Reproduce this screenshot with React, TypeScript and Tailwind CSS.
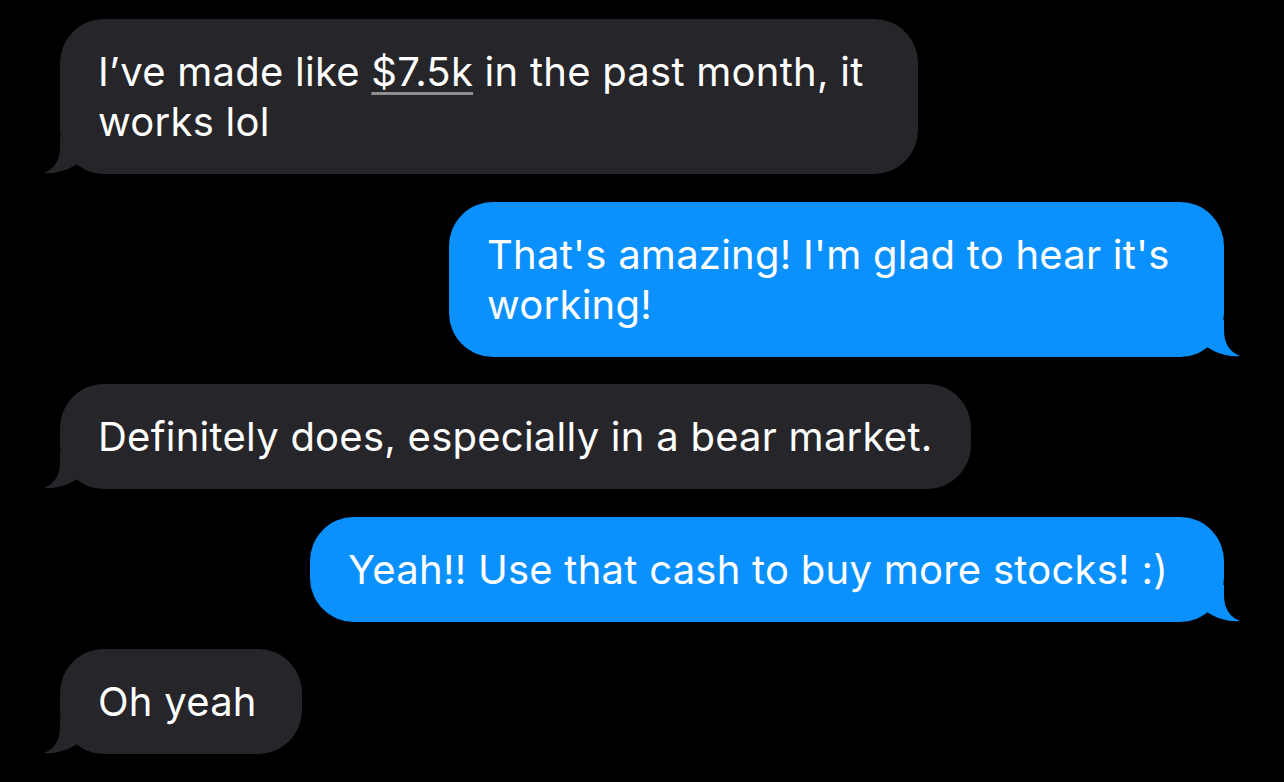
const Tail = ({ side, color }: { side: 'left' | 'right'; color: string }) => (
  <svg
    width="40"
    height="37"
    viewBox="0 0 40 37"
    className={
      side === 'left'
        ? 'absolute bottom-0 -left-[16px]'
        : 'absolute bottom-0 -right-[16px] -scale-x-100'
    }
  >
    <path d="M16 0 L16 10 C16 24 10 32 0 36 C14 37.5 28 31 36 25 L36 0 Z" fill={color} />
  </svg>
);

const Received = ({ children, w }: { children: React.ReactNode; w: string }) => (
  <div className={`relative self-start ml-[60px] ${w}`}>
    <div className="relative z-10 rounded-[44px] bg-[#262529] pl-[38px] pr-[30px] pt-[28px] pb-[27px] text-white">
      {children}
    </div>
    <Tail side="left" color="#262529" />
  </div>
);

const Sent = ({ children, w }: { children: React.ReactNode; w: string }) => (
  <div className={`relative self-end mr-[60px] ${w}`}>
    <div className="relative z-10 rounded-[44px] bg-[#0a91fd] pl-[38px] pr-[30px] pt-[28px] pb-[27px] text-white">
      {children}
    </div>
    <Tail side="right" color="#0a91fd" />
  </div>
);

export default function App() {
  return (
    <div
      className="h-[782px] w-[1284px] overflow-hidden bg-black pt-[19px] flex flex-col gap-[27.5px] text-[40px] leading-[50px] tracking-[0.25px]"
      style={{ fontFamily: 'Inter, "Noto Sans", sans-serif' }}
    >
      <Received w="w-[858px]">
        I’ve made like{' '}
        <span className="underline decoration-[#8e8e93] decoration-[3px] underline-offset-[6px]">$7.5k</span>{' '}
        in the past month, it works lol
      </Received>
      <Sent w="w-[775px]">That's amazing! I'm glad to hear it's working!</Sent>
      <Received w="w-[911px]">Definitely does, especially in a bear market.</Received>
      <Sent w="w-[914px]">Yeah!! Use that cash to buy more stocks! :)</Sent>
      <Received w="w-[242px]">Oh yeah</Received>
      <div className="ml-[43px] w-[338px] h-[2px] shrink-0 rounded-full bg-[#1f1f22]" />
    </div>
  );
}
